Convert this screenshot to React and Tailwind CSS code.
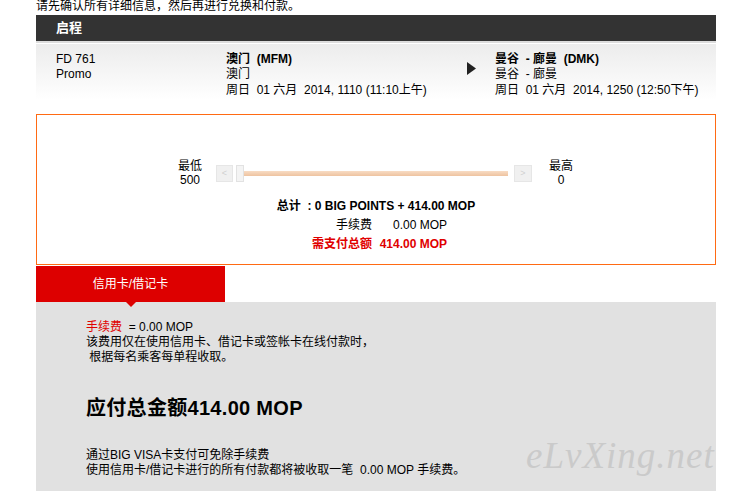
const font = { fontFamily: '"Liberation Sans", Arial, "Noto Sans CJK SC", sans-serif' };

const FlightPoint = ({ city, sub, date }) => (
  <div className="whitespace-pre leading-[15px]">
    <div className="font-bold">{city}</div>
    <div>{sub}</div>
    <div className="mt-[1px]">{date}</div>
  </div>
);

const StepButton = ({ label, className = '' }) => (
  <div
    className={`flex h-[17px] w-[17px] items-center justify-center border border-[#e6e6e6] bg-[#f0f0f0] text-[9px] text-[#d0d0d0] ${className}`}
  >
    {label}
  </div>
);

const App = () => {
  return (
    <div className="min-h-[491px] bg-white text-[12px] text-black" style={font}>
      <div className="ml-[36px] w-[680px]">
        {/* Intro */}
        <div className="-mt-[1px] h-[16px] leading-[14px]">请先确认所有详细信息，然后再进行兑换和付款。</div>

        {/* Journey header */}
        <div className="h-[26px] bg-[#333333] pl-[20px] text-[13px] font-bold leading-[26px] text-white">
          启程
        </div>
        <div className="h-[2px] bg-[#dcdcdc]"></div>
        <div className="h-[1px] bg-white"></div>

        {/* Flight row */}
        <div className="flex h-[56px] bg-gradient-to-b from-[#ececec] to-white pl-[20px] pt-[8px]">
          <div className="w-[170px] leading-[15px]">
            <div>FD 761</div>
            <div>Promo</div>
          </div>
          <div className="w-[241px]">
            <FlightPoint city="澳门  (MFM)" sub="澳门" date="周日  01 六月  2014, 1110 (11:10上午)" />
          </div>
          <div className="w-[28px] pt-[10px]">
            <svg width="9" height="13" viewBox="0 0 9 13">
              <polygon points="0,0 9,6.5 0,13" fill="#222" />
            </svg>
          </div>
          <div>
            <FlightPoint city="曼谷  - 廊曼  (DMK)" sub="曼谷  - 廊曼" date="周日  01 六月  2014, 1250 (12:50下午)" />
          </div>
        </div>

        {/* Points box */}
        <div className="mt-[14px] h-[151px] border border-[#ff6a13] pt-[44px]">
          <div className="flex items-start">
            <div className="ml-[133px] w-[40px] text-center leading-[14px]">
              <div>最低</div>
              <div>500</div>
            </div>
            <StepButton label="<" className="ml-[6px] mt-[6px]" />
            <div className="ml-[3px] mt-[6px] h-[17px] w-[8px] border border-[#e2e2e2] bg-[#f4f4f4]"></div>
            <div className="mt-[12px] h-[5px] w-[264px] bg-gradient-to-b from-[#f8dcc4] to-[#eec3a0]"></div>
            <StepButton label=">" className="ml-[6px] mt-[6px] w-[18px]" />
            <div className="ml-[9px] w-[40px] text-center leading-[14px]">
              <div>最高</div>
              <div>0</div>
            </div>
          </div>

          <div className="mt-[10px] text-center font-bold leading-[19px]">
            总计 &nbsp;: 0 BIG POINTS + 414.00 MOP
          </div>
          <div className="flex leading-[19px]">
            <div className="w-[335px] text-right">手续费</div>
            <div className="w-[75px] text-right">0.00 MOP</div>
          </div>
          <div className="flex font-bold leading-[19px] text-[#e00000]">
            <div className="w-[335px] text-right">需支付总额</div>
            <div className="w-[75px] text-right">414.00 MOP</div>
          </div>
        </div>

        {/* Payment tab */}
        <div className="relative z-10 mt-[1px] h-[36px] w-[189px] bg-[#dd0000] text-center leading-[36px] text-white">
          信用卡/借记卡
          <div className="absolute left-1/2 top-[36px] h-0 w-0 -translate-x-1/2 border-x-[5px] border-t-[5px] border-x-transparent border-t-[#dd0000]"></div>
        </div>

        {/* Payment details */}
        <div className="relative h-[190px] bg-[#e1e1e1] pl-[50px] pt-[18px]">
          <div className="leading-[15px]">
            <div>
              <span className="text-[#e00000]">手续费</span>&nbsp;&nbsp;= 0.00 MOP
            </div>
            <div>该费用仅在使用信用卡、借记卡或签帐卡在线付款时，</div>
            <div>&nbsp;根据每名乘客每单程收取。</div>
          </div>
          <div className="mt-[31px] text-[20px] font-bold leading-[24px] tracking-[0.3px]">应付总金额414.00 MOP</div>
          <div className="mt-[28px] leading-[15px]">
            <div>通过BIG VISA卡支付可免除手续费</div>
            <div>使用信用卡/借记卡进行的所有付款都将被收取一笔&nbsp; 0.00 MOP 手续费。</div>
          </div>
          <div
            className="absolute left-[490px] top-[134px] text-[37px] italic leading-[40px] tracking-[1px] text-[#cacaca]"
            style={{ fontFamily: '"Liberation Serif", "DejaVu Serif", serif' }}
          >
            eLvXing.net
          </div>
        </div>
      </div>
    </div>
  );
};

export default App;
